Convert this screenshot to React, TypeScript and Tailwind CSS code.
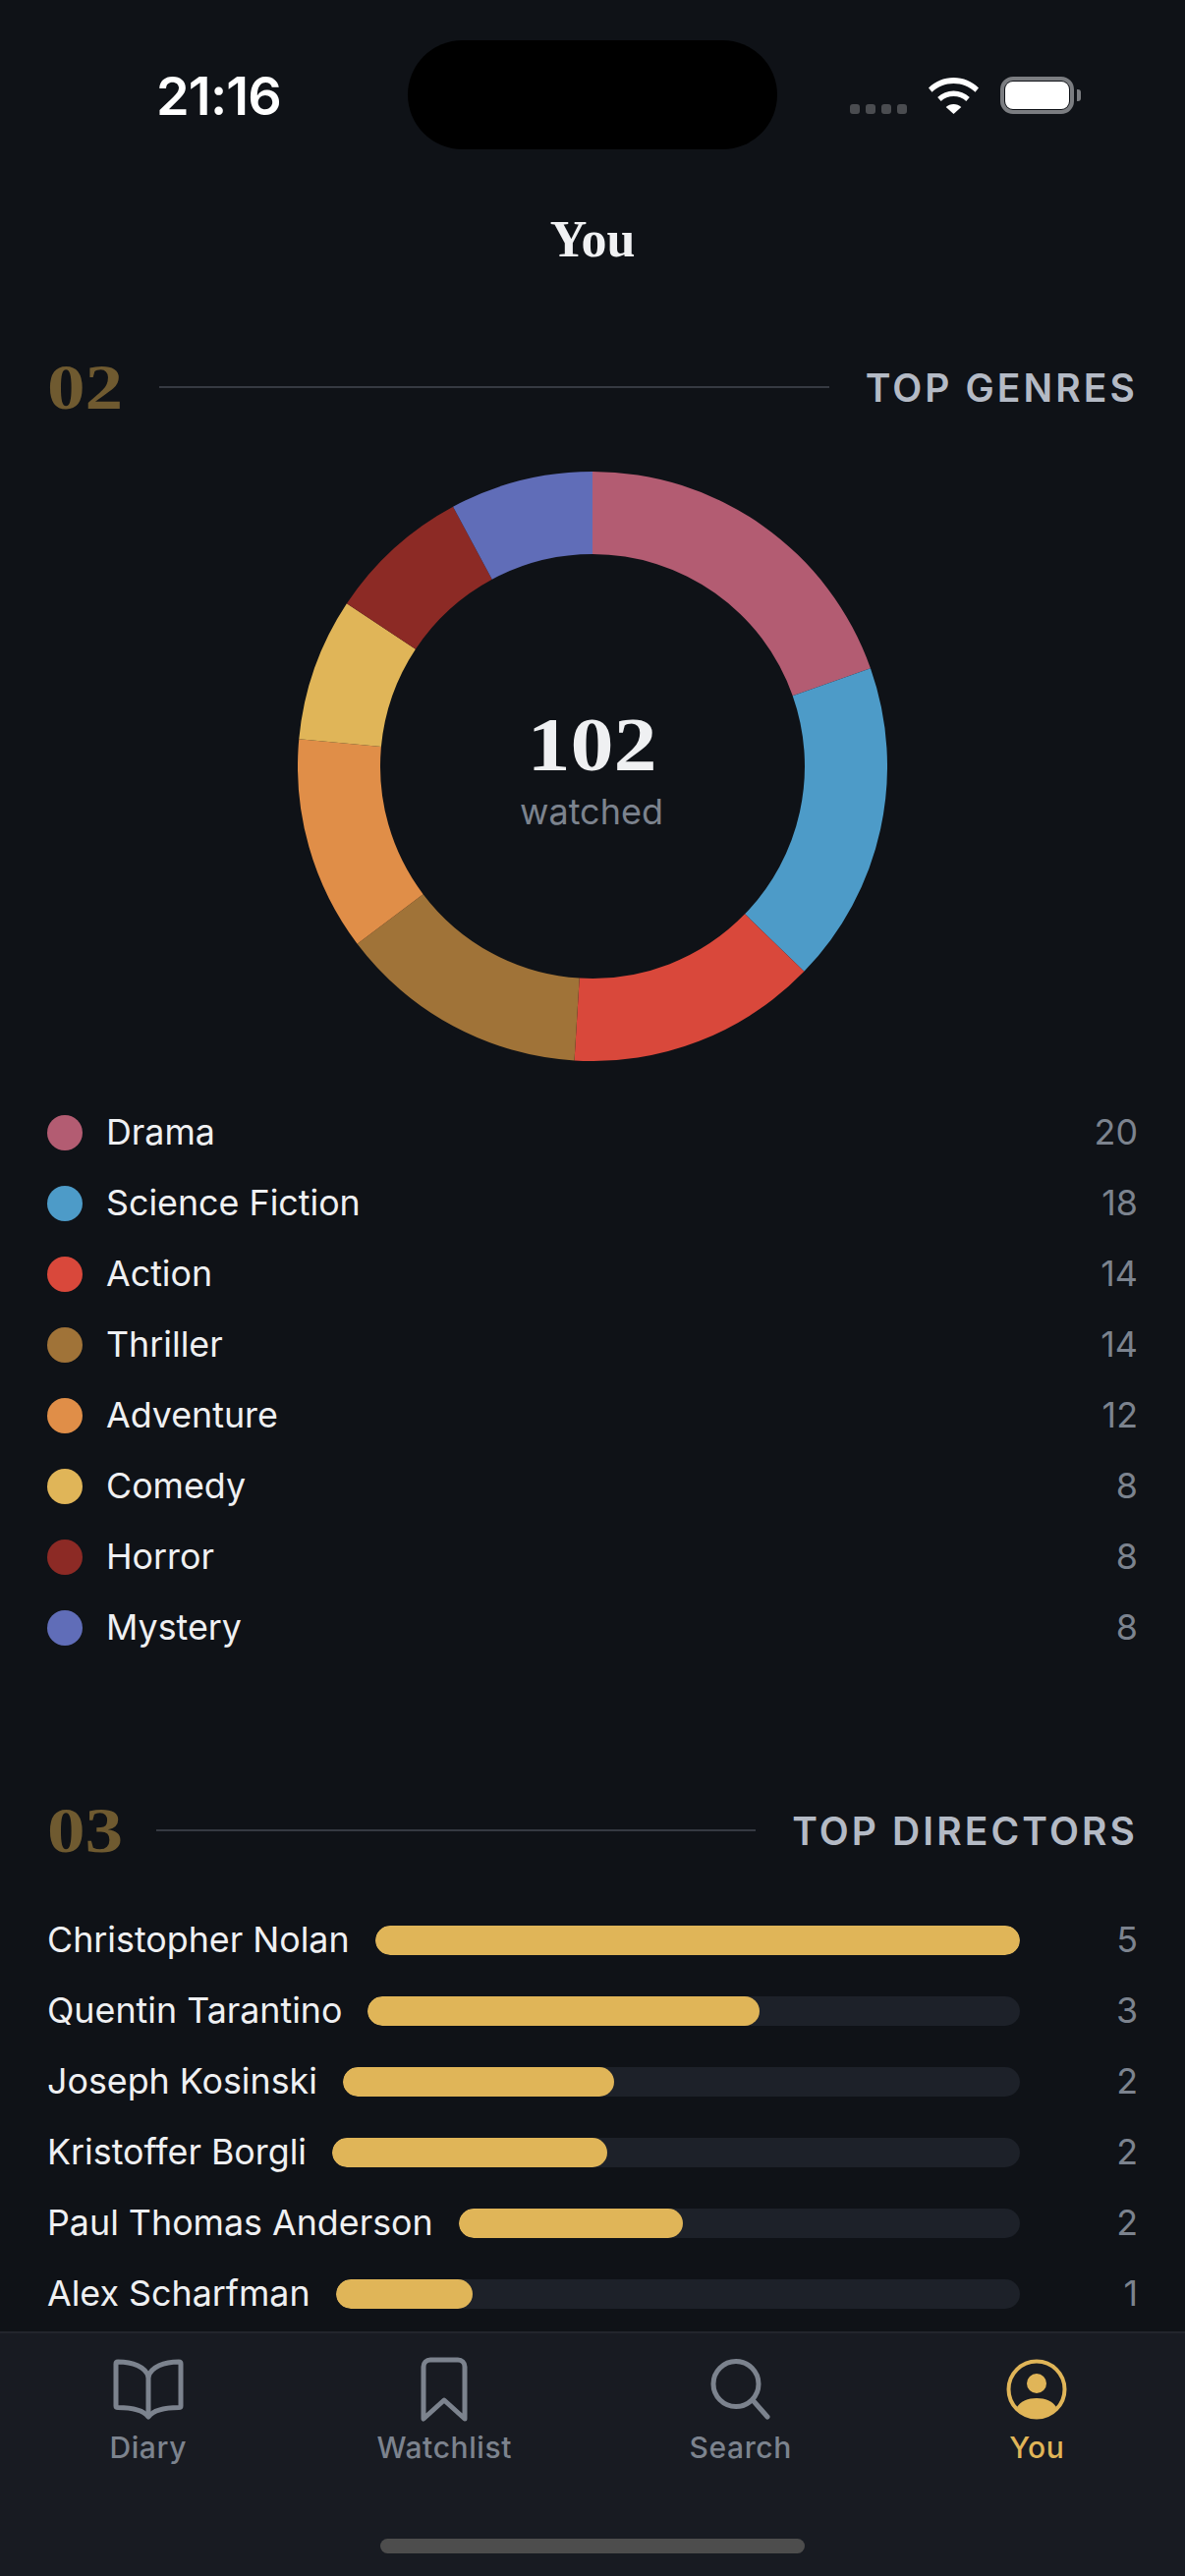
const GOLD = "#e0b558";

const genres = [
  { name: "Drama", count: 20, color: "#b35c72" },
  { name: "Science Fiction", count: 18, color: "#4d9bc8" },
  { name: "Action", count: 14, color: "#d9483b" },
  { name: "Thriller", count: 14, color: "#a07338" },
  { name: "Adventure", count: 12, color: "#e08e48" },
  { name: "Comedy", count: 8, color: "#e0b558" },
  { name: "Horror", count: 8, color: "#8c2a25" },
  { name: "Mystery", count: 8, color: "#606db8" },
];

const directors = [
  { name: "Christopher Nolan", count: 5 },
  { name: "Quentin Tarantino", count: 3 },
  { name: "Joseph Kosinski", count: 2 },
  { name: "Kristoffer Borgli", count: 2 },
  { name: "Paul Thomas Anderson", count: 2 },
  { name: "Alex Scharfman", count: 1 },
];

function Donut() {
  const total = genres.reduce((s, g) => s + g.count, 0);
  const R = 300;
  const r = 216;
  let acc = 0;
  const pt = (rad: number, a: number) => {
    const t = (a - 90) * (Math.PI / 180);
    return `${(300 + rad * Math.cos(t)).toFixed(2)} ${(300 + rad * Math.sin(t)).toFixed(2)}`;
  };
  return (
    <svg width="600" height="600" viewBox="0 0 600 600" className="absolute inset-0">
      {genres.map((g) => {
        const a0 = (acc / total) * 360;
        acc += g.count;
        const a1 = (acc / total) * 360;
        const large = a1 - a0 > 180 ? 1 : 0;
        return (
          <path
            key={g.name}
            fill={g.color}
            d={`M ${pt(R, a0)} A ${R} ${R} 0 ${large} 1 ${pt(R, a1)} L ${pt(r, a1)} A ${r} ${r} 0 ${large} 0 ${pt(r, a0)} Z`}
          />
        );
      })}
    </svg>
  );
}

function SectionHeader({ no, title, lineClass }: { no: string; title: string; lineClass: string }) {
  return (
    <div className="flex items-center h-[78px]">
      <span className="font-['Liberation_Serif'] font-bold text-[66px] leading-none text-[#6f5a30] scale-x-[1.17] origin-left">{no}</span>
      <div className={`flex-1 h-[2px] bg-[#363a42] mr-[37px] ${lineClass}`} />
      <span className="font-['Inter'] font-semibold text-[39px] leading-none tracking-[3.1px] text-[#b4bac5]">{title}</span>
    </div>
  );
}

function StatusBar() {
  return (
    <div className="h-[192px] shrink-0 flex items-start relative">
      <span className="absolute left-[159px] top-[69px] font-['Inter'] font-semibold text-[54px] leading-[58px] tracking-[-0.8px] text-white">21:16</span>
      <div className="absolute left-[415px] top-[41px] w-[376px] h-[111px] rounded-[56px] bg-black" />
      <div className="absolute left-[865px] top-[106px] flex gap-[6px]">
        <span className="w-[10px] h-[10px] rounded-[3px] bg-[#4a4c50]" />
        <span className="w-[10px] h-[10px] rounded-[3px] bg-[#4a4c50]" />
        <span className="w-[10px] h-[10px] rounded-[3px] bg-[#4a4c50]" />
        <span className="w-[10px] h-[10px] rounded-[3px] bg-[#4a4c50]" />
      </div>
      <svg className="absolute left-[945px] top-[79px]" width="51" height="37" viewBox="0 0 51 37" fill="#fff">
        <path d="M25.500 0C15.500 0 7 3.800 0 10.500l3.500 4.200C9.500 9.200 17 6 25.500 6S41.500 9.200 47.500 14.700l3.500-4.200C44 3.800 35.500 0 25.500 0Z" />
        <path d="M25.500 13.500c-6.300 0-11.800 2.300-16.300 6.400l3.500 4.100c3.400-3 7.900-4.900 12.800-4.900s9.400 1.900 12.800 4.900l3.500-4.100C37.300 15.800 31.800 13.500 25.500 13.500Z" />
        <path d="M25.500 27c-3 0-5.700 1.100-7.800 2.900L25.500 37l7.800-7.100c-2.100-1.800-4.800-2.900-7.800-2.900Z" />
      </svg>
      <div className="absolute left-[1018px] top-[78px] w-[75px] h-[38px] rounded-[13px] border-[4px] border-[#7b7d81] p-[1px]">
        <div className="w-full h-full rounded-[8px] bg-white" />
      </div>
      <div className="absolute left-[1096px] top-[91px] w-[4px] h-[12px] rounded-r-[3px] bg-[#7b7d81]" />
    </div>
  );
}

function BookIcon() {
  return (
    <svg width="72" height="62" viewBox="0 0 72 62" fill="none" stroke="#7c838e" strokeWidth="5" strokeLinejoin="round" strokeLinecap="round">
      <path d="M36 18C33 8 20 3 5 3 3.500 3 3 4 3 5v43c0 1 .5 1.500 2 1.500C18 49.500 30 51 36 59c6-8 18-9.500 31-9.500 1.500 0 2-.5 2-1.500V5c0-1-.5-2-2-2C52 3 39 8 36 18Z" />
      <path d="M36 18v40" />
    </svg>
  );
}

function BookmarkIcon() {
  return (
    <svg width="48" height="66" viewBox="0 0 48 66" fill="none" stroke="#7c838e" strokeWidth="5" strokeLinejoin="round" strokeLinecap="round">
      <path d="M3 10c0-4 3-7 7-7h28c4 0 7 3 7 7v53L24 44 3 63Z" />
    </svg>
  );
}

function SearchIcon() {
  return (
    <svg width="62" height="62" viewBox="0 0 62 62" fill="none" stroke="#7c838e" strokeWidth="5" strokeLinecap="round">
      <circle cx="26" cy="25.500" r="23" />
      <path d="M43.500 42.500L58 59" />
    </svg>
  );
}

function YouIcon() {
  return (
    <svg width="62" height="62" viewBox="0 0 62 62">
      <circle cx="31" cy="31" r="28.500" fill="none" stroke={GOLD} strokeWidth="4" />
      <circle cx="31" cy="25" r="10" fill={GOLD} />
      <path d="M11 49C15 43 22 40 31 40S47 43 51 49C46 55 39 60 31 60S16 55 11 49Z" fill={GOLD} />
    </svg>
  );
}

const tabs = [
  { label: "Diary", icon: <BookIcon />, color: "text-[#7c838e]" },
  { label: "Watchlist", icon: <BookmarkIcon />, color: "text-[#7c838e]" },
  { label: "Search", icon: <SearchIcon />, color: "text-[#7c838e]" },
  { label: "You", icon: <YouIcon />, color: "text-[#e0b558]" },
];

function TabBar() {
  return (
    <div className="absolute left-0 right-0 bottom-0 h-[249px] bg-[#181b22] border-t-[2px] border-[#22252c]">
      <div className="grid grid-cols-4 pt-[22px]">
        {tabs.map((t) => (
          <div key={t.label} className="flex flex-col items-center">
            <div className="h-[70px] flex items-center justify-center">{t.icon}</div>
            <span className={`mt-[6px] font-['Inter'] font-medium text-[30px] leading-[36px] tracking-[0.6px] ${t.color}`}>{t.label}</span>
          </div>
        ))}
      </div>
      <div className="absolute left-[387px] top-[209px] w-[432px] h-[15px] rounded-full bg-[#4d4d4d]" />
    </div>
  );
}

export default function App() {
  return (
    <div className="relative w-[1206px] h-[2622px] overflow-hidden bg-[#0f1217] flex flex-col font-['Inter',sans-serif]">
      <StatusBar />
      <div className="h-[104px] shrink-0 flex items-center justify-center">
        <span className="font-['Liberation_Serif'] font-bold text-[52px] leading-none text-[#f0f1f3]">You</span>
      </div>
      <div className="px-[48px] mt-[59px]">
        <SectionHeader no="02" title="TOP GENRES" lineClass="ml-[48px]" />
        <div className="relative w-[600px] h-[600px] mx-auto mt-[47px]">
          <Donut />
          <div className="absolute inset-0 flex flex-col items-center justify-center pt-[8px] pr-[2px]">
            <span className="font-['Liberation_Serif'] font-bold text-[78px] leading-[76px] text-[#eff0f2] scale-x-[1.13]">102</span>
            <span className="mt-[8px] font-['Inter'] text-[36px] leading-[44px] text-[#7c838e]">watched</span>
          </div>
        </div>
        <div className="mt-[37px] flex flex-col">
          {genres.map((g) => (
            <div key={g.name} className="h-[72px] flex items-center">
              <span className="w-[36px] h-[36px] rounded-full shrink-0" style={{ backgroundColor: g.color }} />
              <span className="ml-[24px] flex-1 font-['Inter'] text-[35.8px] text-[#eff0f2]">{g.name}</span>
              <span className="font-['Inter'] text-[35.8px] text-[#7c838e]">{g.count}</span>
            </div>
          ))}
        </div>
        <div className="mt-[131px]">
          <SectionHeader no="03" title="TOP DIRECTORS" lineClass="ml-[45px]" />
        </div>
        <div className="mt-[37px] flex flex-col">
          {directors.map((d) => (
            <div key={d.name} className="h-[72px] flex items-center">
              <span className="font-['Inter'] text-[35.8px] text-[#eff0f2] whitespace-nowrap mr-[26px]">{d.name}</span>
              <div className="flex-1 h-[30px] rounded-full bg-[#1d2129] overflow-hidden">
                <div className="h-full rounded-full bg-[#e0b558]" style={{ width: `${(d.count / 5) * 100}%` }} />
              </div>
              <span className="w-[120px] shrink-0 text-right font-['Inter'] text-[35.8px] text-[#7c838e]">{d.count}</span>
            </div>
          ))}
        </div>
      </div>
      <TabBar />
    </div>
  );
}
